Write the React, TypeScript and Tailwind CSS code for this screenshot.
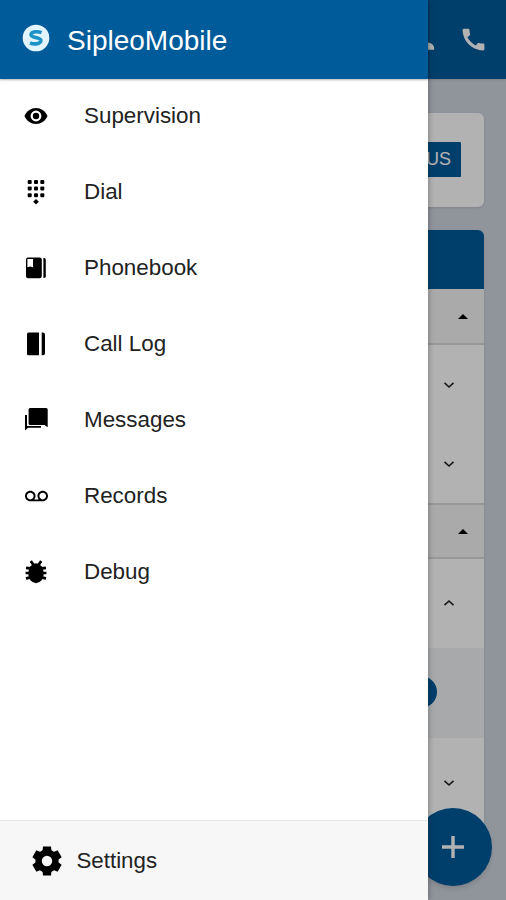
import type { ReactNode } from "react";
import { MdCall, MdVoicemail } from "react-icons/md";

interface MenuItem {
  label: string;
  icon: ReactNode;
}

const EyeIcon = () => (
  <svg width="24" height="24" viewBox="0 0 24 24">
    <path
      fillRule="evenodd"
      d="M12 4C17 4 21.5 7.2 23.5 12C21.5 16.8 17 20 12 20S2.5 16.8 0.5 12C2.5 7.2 7 4 12 4ZM12 6.6A5.4 5.4 0 1 0 12 17.4A5.4 5.4 0 1 0 12 6.6Z"
    />
    <circle cx="12" cy="12" r="3.2" />
  </svg>
);

const dots = [5.7, 12, 18.3];

const KeypadIcon = () => (
  <svg width="24" height="26" viewBox="0 0 24 26">
    {dots.map((x) =>
      [3, 9.6, 16.2].map((y) => (
        <rect key={`${x}-${y}`} x={x - 2} y={y - 2} width="4" height="4" rx="1" />
      ))
    )}
    <path d="M12 20L14.8 22.8L12 25.6L9.2 22.8Z" />
  </svg>
);

const PhonebookIcon = () => (
  <svg width="24" height="24" viewBox="0 0 24 24">
    <path
      fillRule="evenodd"
      d="M4 1.5H15.5Q17.8 1.5 17.8 3.5V20.2Q17.8 22.3 15.5 22.3H4Q2 22.3 2 20.2V3.5Q2 1.5 4 1.5ZM3.4 3.1V11.3L6.2 10.4L9 11.3V3.1Z"
    />
    <path d="M19.4 1.7Q21.8 1.7 21.8 3.7V20.2Q21.8 22.1 19.4 22.1Z" />
  </svg>
);

const CallLogIcon = () => (
  <svg width="24" height="24" viewBox="0 0 24 24">
    <path d="M4.5 0.5H15V23.2H4.5Q3 23.2 3 22V2Q3 0.5 4.5 0.5Z" />
    <path d="M17.7 0.5H18.7Q21 0.5 21 2.5V21.2Q21 23.2 18.7 23.2H17.7Z" />
  </svg>
);

const MessagesIcon = () => (
  <svg width="24" height="24" viewBox="0 0 24 24" className="relative -top-px">
    <path d="M6 1H22.2Q23.7 1 23.7 2.5V20.2L20.4 18H6Q4.6 18 4.6 16.5V2.5Q4.6 1 6 1Z" />
    <path d="M1 8H3V19H17V20.8H4L1 23.5Z" />
  </svg>
);

const BugIcon = () => (
  <svg width="24" height="24" viewBox="0 0 24 24">
    <ellipse cx="12" cy="13.2" rx="7.8" ry="10" />
    <path
      d="M6.8 1L9.5 5M17.2 1L14.5 5M2 7.8L6 8.4M22 7.8L18 8.4M1.6 13H22.4M2 18.4L6 17.6M22 18.4L18 17.6"
      stroke="#000"
      strokeWidth="2.7"
    />
  </svg>
);

const teeth = [0, 60, 120, 180, 240, 300];

const GearIcon = () => (
  <svg width="30" height="30" viewBox="0 0 30 30">
    {teeth.map((angle) => (
      <path
        key={angle}
        d="M11 0.4H19L19.8 8H10.2Z"
        transform={`rotate(${angle} 15 15)`}
      />
    ))}
    <circle cx="15" cy="15" r="8.4" fill="none" stroke="#000" strokeWidth="6.4" />
  </svg>
);

const PersonIcon = () => (
  <svg width="29" height="29" viewBox="0 0 24 24" fill="currentColor">
    <circle cx="11" cy="8" r="4" />
    <path d="M3 20.5V18.5C3.5 15.5 8 14 11.5 14C14 14 19.6 14.4 20 19V20.5Z" />
  </svg>
);

const Logo = () => (
  <svg width="28" height="28" viewBox="0 0 28 28" className="relative -top-[1.5px]">
    <circle cx="14" cy="14" r="13.3" fill="#e3f5fc" />
    <path
      d="M19.5 8.7C16.5 7.4 9.4 7 9 10.6C8.7 14.2 19.4 12.9 18.9 16.8C18.3 20.6 11.3 20.4 8 18.9"
      fill="none"
      stroke="#1b93c6"
      strokeWidth="3.6"
    />
  </svg>
);

const Chevron = ({ up = false }: { up?: boolean }) => (
  <svg
    width="12"
    height="8"
    viewBox="0 0 12 8"
    fill="none"
    stroke="#222"
    strokeWidth="1.6"
    className={up ? "mb-0.5 rotate-180" : ""}
  >
    <path d="M1.5 1.8L6 6L10.5 1.8" />
  </svg>
);

const SectionHeader = ({ className = "" }: { className?: string }) => (
  <div
    className={`flex shrink-0 items-center justify-end border-b-2 border-[#dadada] bg-[#f4f4f4] pr-4 ${className}`}
  >
    <svg width="10" height="5" viewBox="0 0 10 5">
      <path d="M0 5L5 0L10 5Z" />
    </svg>
  </div>
);

const menu: MenuItem[] = [
  { label: "Supervision", icon: <EyeIcon /> },
  { label: "Dial", icon: <KeypadIcon /> },
  { label: "Phonebook", icon: <PhonebookIcon /> },
  { label: "Call Log", icon: <CallLogIcon /> },
  { label: "Messages", icon: <MessagesIcon /> },
  { label: "Records", icon: <MdVoicemail size={23} /> },
  { label: "Debug", icon: <BugIcon /> },
];

function HomePage() {
  return (
    <div className="flex h-full flex-col bg-[#cfd5df]">
      <header className="flex h-[79px] shrink-0 items-center justify-end gap-5 bg-[#005b9a] pr-[18px] text-white shadow">
        <PersonIcon />
        <MdCall size={29} />
      </header>

      <div className="flex flex-col gap-[23px] px-[22px] pt-[34px]">
        <div className="flex h-[94px] items-center justify-end rounded-md bg-white pr-[23px] shadow">
          <button className="mb-px h-[35px] rounded-[1px] bg-[#005b9a] px-2.5 text-[18px] text-white">
            STATUS
          </button>
        </div>

        <div className="flex flex-col overflow-hidden rounded-md bg-white shadow">
          <div className="h-[59px] bg-[#005b9a]" />
          <SectionHeader className="h-[56px]" />
          <div className="flex h-[79px] items-center justify-end pr-[29px]">
            <Chevron />
          </div>
          <div className="flex h-[79px] items-center justify-end pr-[29px]">
            <Chevron />
          </div>
          <SectionHeader className="h-[56px] border-t-2" />
          <div className="flex h-[89px] items-center justify-end pr-[29px]">
            <Chevron up />
          </div>
          <div className="flex h-[90px] items-center justify-end bg-[#f1f2f4] pr-[47px]">
            <div className="mb-0.5 size-8 rounded-full bg-[#005b9a]" />
          </div>
          <div className="flex h-[90px] items-center justify-end pr-[29px]">
            <Chevron />
          </div>
        </div>
      </div>
    </div>
  );
}

function Drawer() {
  return (
    <aside className="absolute inset-y-0 left-0 flex w-[428px] flex-col bg-white shadow-[0_0_6px_rgba(0,0,0,0.35)]">
      <header className="flex h-[79px] shrink-0 items-center gap-[17px] bg-[#005b9a] pl-[22px] text-white shadow-[0_1px_2px_rgba(0,0,0,0.3)]">
        <Logo />
        <h1 className="pt-0.5 text-[28px]">SipleoMobile</h1>
      </header>

      <nav className="flex flex-1 flex-col gap-9 pt-[17px]">
        {menu.map((item) => (
          <a key={item.label} className="flex h-10 items-center pl-[22px]">
            <span className="flex w-7 justify-center">{item.icon}</span>
            <span className="ml-[34px] text-[22.4px] text-[#222]">
              {item.label}
            </span>
          </a>
        ))}
      </nav>

      <footer className="flex h-20 items-center border-t border-[#e6e6e6] bg-[#f7f7f7] pl-8">
        <GearIcon />
        <span className="ml-[14.5px] text-[22.3px] text-[#222]">Settings</span>
      </footer>
    </aside>
  );
}

export default function App() {
  return (
    <div className="relative h-[900px] w-[506px] overflow-hidden font-['Liberation_Sans',Arial,sans-serif] text-black">
      <HomePage />
      <button className="absolute right-[14px] bottom-[14px] flex size-[78px] items-center justify-center rounded-full bg-[#005b9a] shadow-md">
        <svg width="22" height="22" viewBox="0 0 22 22" stroke="#fff" strokeWidth="3.4">
          <path d="M11 0V22M0 11H22" />
        </svg>
      </button>
      <div className="absolute inset-0 bg-black/30" />
      <Drawer />
    </div>
  );
}
